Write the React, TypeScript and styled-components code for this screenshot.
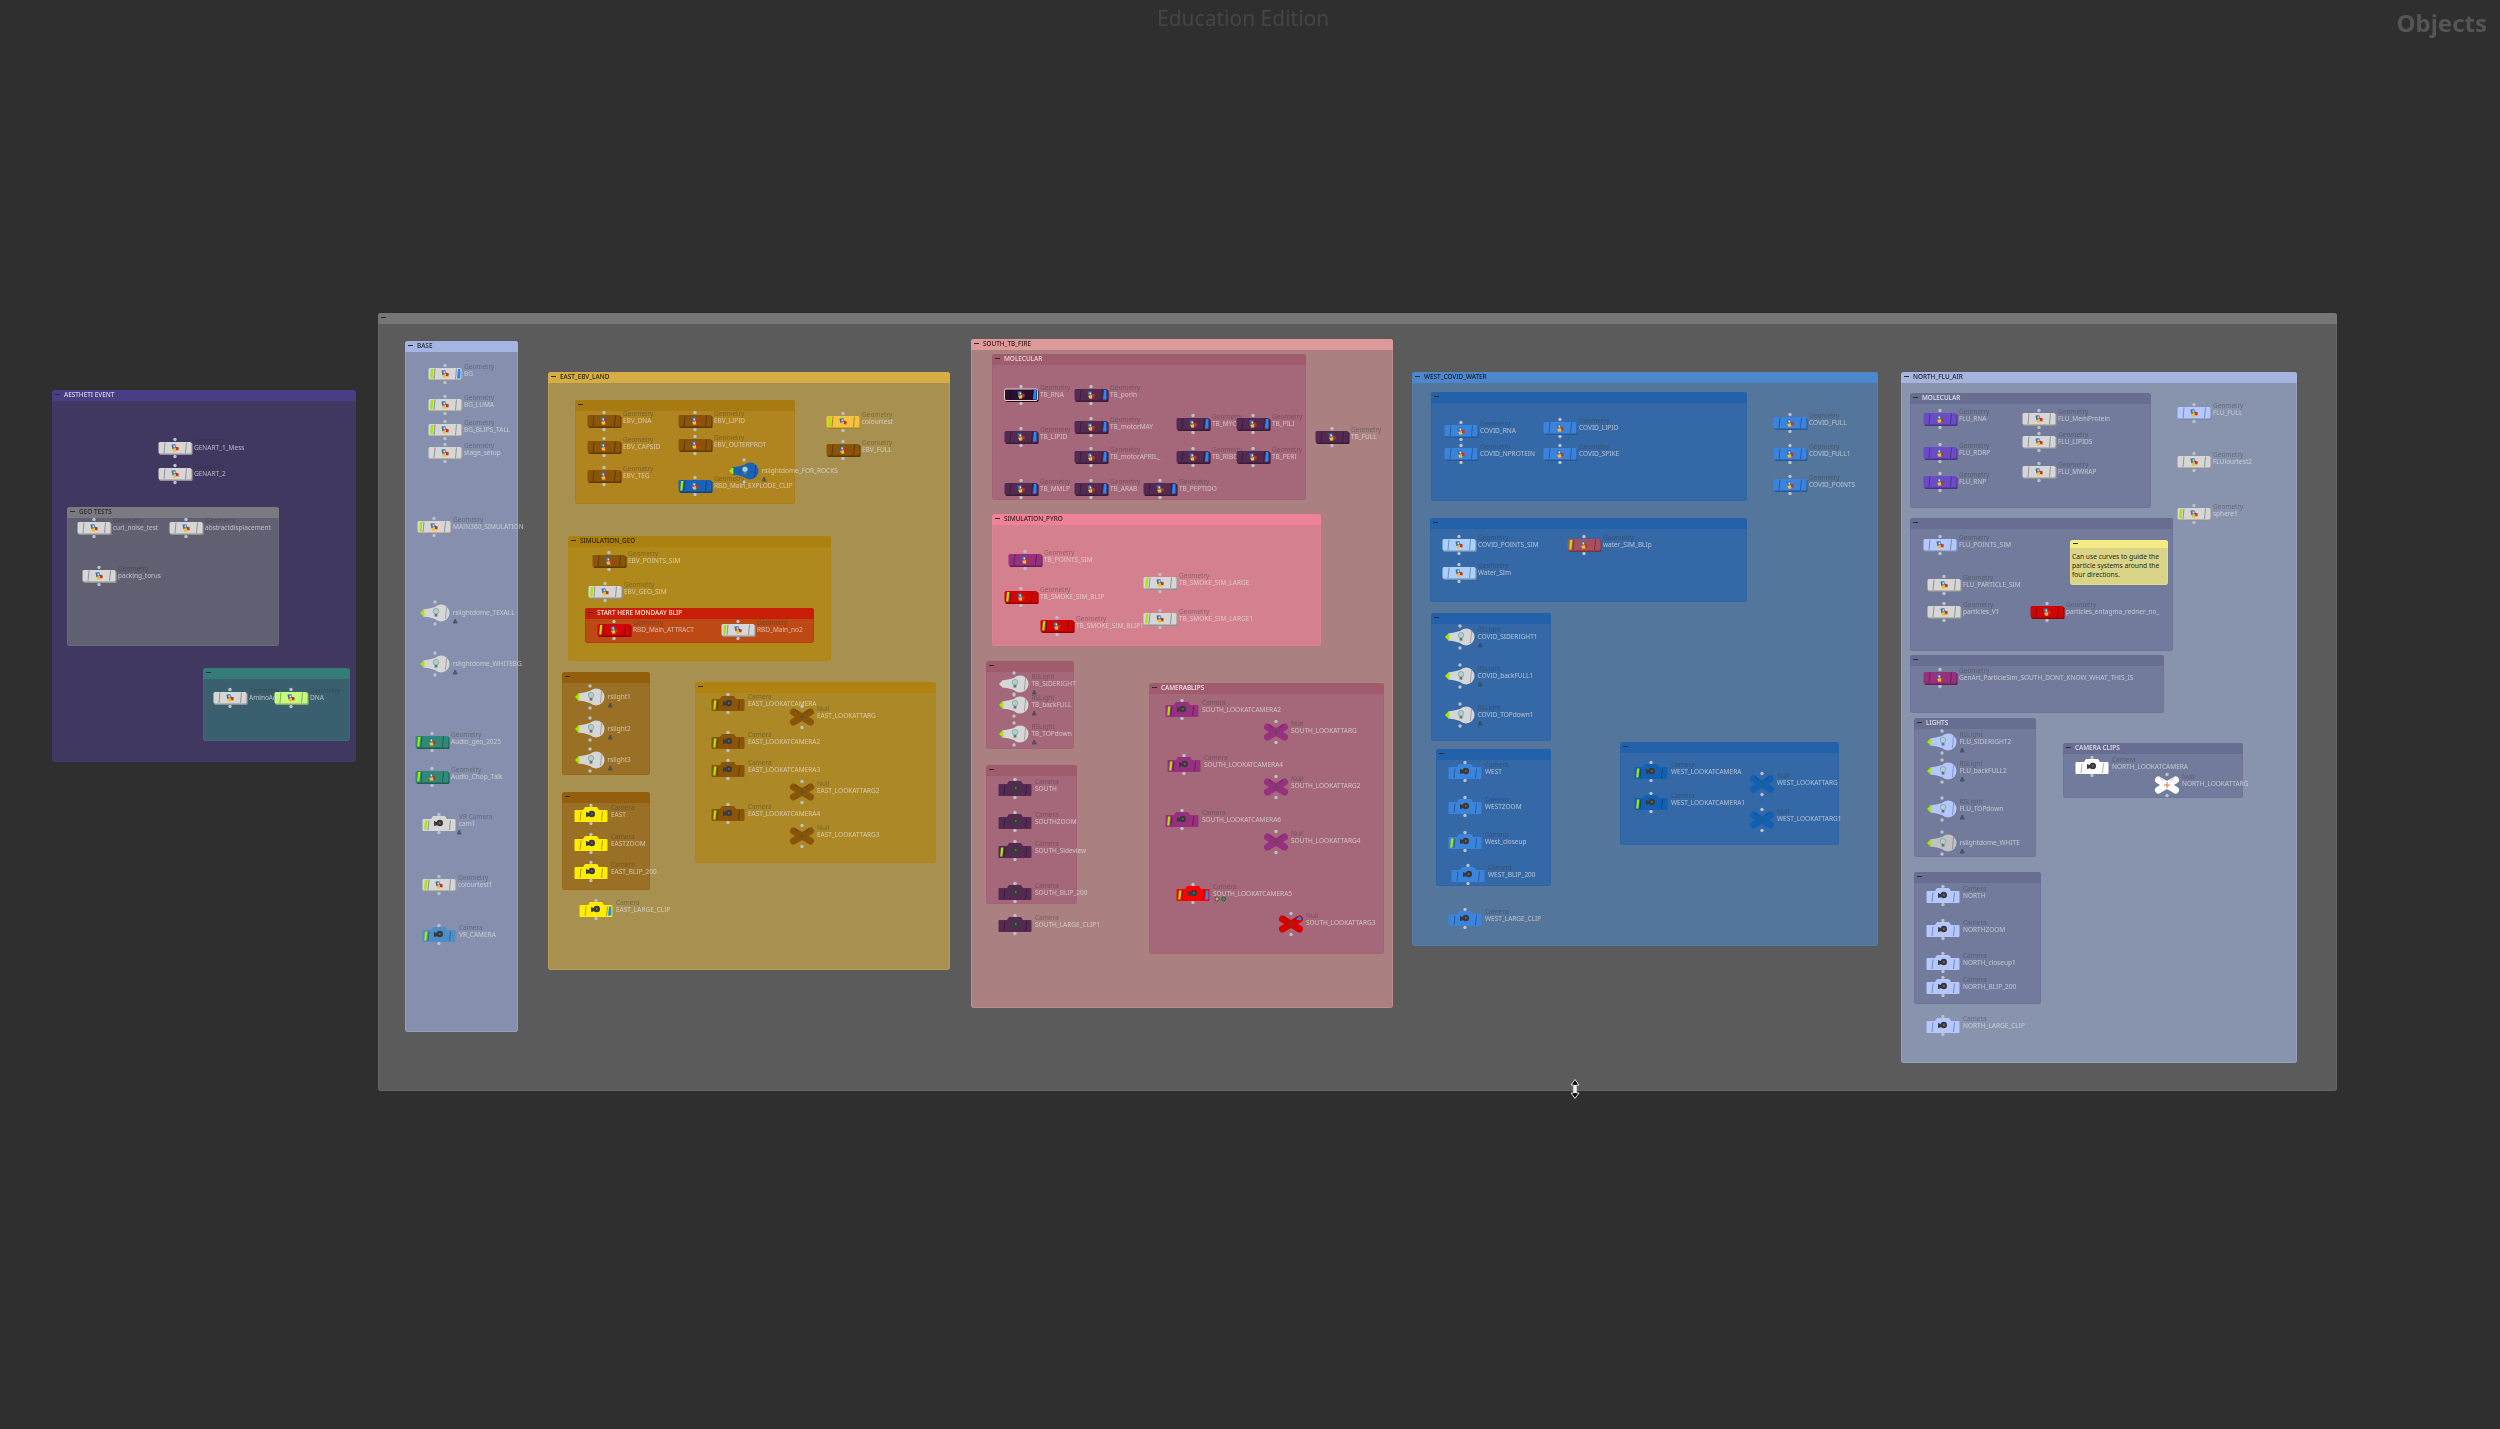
import React from 'react'
import styled, { createGlobalStyle } from 'styled-components'

const GlobalStyle = createGlobalStyle`
  html, body {
    margin: 0;
    background: #2f2f2f;
    overflow: hidden;
  }
`

const Canvas = styled.div`
  position: relative;
  width: 2500px;
  height: 1429px;
  overflow: hidden;
  background: #2f2f2f;
  font-family: 'Noto Sans', sans-serif;
`

const Network = styled.div`
  position: absolute;
  inset: 0;
  filter: blur(0.3px);
`

const Edition = styled.div`
  position: absolute;
  left: 1157px;
  top: 3px;
  font-size: 21px;
  line-height: 30px;
  color: #454545;
  white-space: nowrap;
`

const Title = styled.div`
  position: absolute;
  right: 13px;
  top: 5px;
  font-size: 24px;
  line-height: 36px;
  font-weight: 700;
  color: #555;
`

const BoxFrame = styled.div<{ $x: number; $y: number; $r: number; $b: number; $body: string; $head: string }>`
  position: absolute;
  left: ${(p) => p.$x}px;
  top: ${(p) => p.$y}px;
  width: ${(p) => p.$r - p.$x}px;
  height: ${(p) => p.$b - p.$y}px;
  background: ${(p) => p.$body};
  border-radius: 3px;
  box-shadow: inset 0 0 0 1px ${(p) => p.$head}66;
`

const BoxHead = styled.div<{ $head: string; $ink: string; $h?: number }>`
  box-sizing: border-box;
  display: flex;
  align-items: center;
  gap: 2px;
  height: ${(p) => p.$h ?? 11}px;
  padding: 0 0 1.5px 1px;
  border-radius: 3px 3px 0 0;
  background: ${(p) => p.$head};
  color: ${(p) => p.$ink};
  font-size: 6.4px;
  font-weight: 500;
  white-space: nowrap;
`

const Collapse = styled.span`
  flex: none;
  width: 9px;
  height: 100%;
  display: flex;
  align-items: center;
  justify-content: center;

  &::before {
    content: '';
    width: 5px;
    height: 1.4px;
    background: #2c2c34;
  }
`

const StickyText = styled.div`
  padding: 3.5px 2px;
  font-size: 6.7px;
  line-height: 9px;
  color: #2d2a10;
  white-space: nowrap;
`

const NodeWrap = styled.div<{ $x: number; $y: number }>`
  position: absolute;
  left: ${(p) => p.$x - 24}px;
  top: ${(p) => p.$y - 14}px;
  height: 28px;
  display: flex;
  align-items: center;
`

const Glyph = styled.svg`
  flex: none;
  width: 48px;
  height: 28px;
  overflow: visible;
`

const Label = styled.div<{ $off: number }>`
  display: flex;
  flex-direction: column;
  margin-left: ${(p) => p.$off - 24}px;
  margin-bottom: 8px;
  white-space: nowrap;
  font-size: 6.5px;
  line-height: 7px;
`

const TypeText = styled.span`
  color: rgba(50, 50, 50, 0.42);
`

const NameText = styled.span`
  color: rgba(226, 226, 226, 0.72);
`

const CursorMark = styled.svg`
  position: absolute;
  left: 1570px;
  top: 1079px;
  width: 10px;
  height: 20px;
`

type Kind = 'geo' | 'cam' | 'null' | 'light'
type Flag = 'g' | 'b' | 'gb' | ''

interface NodeData {
  k: Kind
  n: string
  x: number
  y: number
  c: string
  f?: Flag
  t?: string
  sel?: boolean
  stamp?: boolean
  dots?: boolean
}

const GREY = '#d6d6d6'
const BROWN = '#8a5509'
const PLUM = '#552a52'
const MAGENTA = '#96307f'
const RED = '#d20505'
const BLUE = '#3b84de'
const NAVY = '#1260b4'
const SKY = '#a9d0ff'
const PERI = '#b4c8ff'
const VIOLET = '#6a4cc8'
const YELLOW = '#ffec00'

const geo = (n: string, x: number, y: number, c = GREY, f: Flag = '', extra: Partial<NodeData> = {}): NodeData => ({ k: 'geo', n, x, y, c, f, t: 'Geometry', ...extra })
const cam = (n: string, x: number, y: number, c: string, f: Flag = '', extra: Partial<NodeData> = {}): NodeData => ({ k: 'cam', n, x, y, c, f, t: 'Camera', ...extra })
const nul = (n: string, x: number, y: number, c: string, f: Flag = ''): NodeData => ({ k: 'null', n, x, y, c, f, t: 'Null' })
const bulb = (n: string, x: number, y: number, c = GREY, f: Flag = 'g', t = 'RSLight'): NodeData => ({ k: 'light', n, x, y, c, f, t, stamp: true })

const boxes = [
  { x: 52, y: 390, r: 356, b: 762, head: '#4a3d86', body: '#403860', ink: '#d8d8e0', title: 'AESTHETI EVENT' },
  { x: 67, y: 507, r: 279, b: 646, head: '#7b7981', body: '#615f72', ink: '#2a2a2a', title: 'GEO TESTS' },
  { x: 203, y: 668, r: 350, b: 741, head: '#347c75', body: '#3a6070', ink: '#222', title: '' },
  { x: 378, y: 313, r: 2337, b: 1091, head: '#767676', body: '#5b5b5b', ink: '#222', title: '' },
  { x: 405, y: 341, r: 518, b: 1032, head: '#a5b5e2', body: '#8690ae', ink: '#24242c', title: 'BASE' },
  { x: 548, y: 372, r: 950, b: 970, head: '#d6ad45', body: '#a89150', ink: '#2a2208', title: 'EAST_EBV_LAND' },
  { x: 575, y: 400, r: 795, b: 504, head: '#a87a12', body: '#b0841f', ink: '#222', title: '' },
  { x: 568, y: 536, r: 831, b: 661, head: '#ad8110', body: '#b0891d', ink: '#2a2208', title: 'SIMULATION_GEO' },
  { x: 585, y: 608, r: 814, b: 643, head: '#c81e08', body: '#bd4a15', ink: '#f2e4e0', title: 'START HERE MONDAAY BLIP' },
  { x: 562, y: 672, r: 650, b: 775, head: '#925f0d', body: '#9a7026', ink: '#222', title: '' },
  { x: 562, y: 792, r: 650, b: 890, head: '#925f0d', body: '#9a7026', ink: '#222', title: '' },
  { x: 695, y: 682, r: 936, b: 863, head: '#b0820f', body: '#ad8826', ink: '#222', title: '' },
  { x: 971, y: 339, r: 1393, b: 1008, head: '#de9a9a', body: '#aa8080', ink: '#3a2020', title: 'SOUTH_TB_FIRE' },
  { x: 992, y: 354, r: 1306, b: 500, head: '#a05c6c', body: '#a5687a', ink: '#e6d6da', title: 'MOLECULAR' },
  { x: 992, y: 514, r: 1321, b: 646, head: '#ee8298', body: '#d4808f', ink: '#3a2028', title: 'SIMULATION_PYRO' },
  { x: 986, y: 661, r: 1074, b: 749, head: '#a05c6c', body: '#a5687a', ink: '#222', title: '' },
  { x: 986, y: 765, r: 1077, b: 904, head: '#a05c6c', body: '#a5687a', ink: '#222', title: '' },
  { x: 1149, y: 683, r: 1384, b: 954, head: '#a05c6c', body: '#a5687a', ink: '#f0e4e8', title: 'CAMERABLIPS' },
  { x: 1412, y: 372, r: 1878, b: 946, head: '#4d87cc', body: '#54759c', ink: '#101c30', title: 'WEST_COVID_WATER' },
  { x: 1431, y: 392, r: 1747, b: 501, head: '#2361ab', body: '#3568a6', ink: '#222', title: '' },
  { x: 1430, y: 518, r: 1747, b: 602, head: '#2361ab', body: '#3568a6', ink: '#222', title: '' },
  { x: 1431, y: 613, r: 1551, b: 741, head: '#2361ab', body: '#3568a6', ink: '#222', title: '' },
  { x: 1436, y: 749, r: 1551, b: 886, head: '#2361ab', body: '#3568a6', ink: '#222', title: '' },
  { x: 1620, y: 742, r: 1839, b: 845, head: '#2361ab', body: '#3568a6', ink: '#222', title: '' },
  { x: 1901, y: 372, r: 2297, b: 1063, head: '#a6b4df', body: '#8893ae', ink: '#24242c', title: 'NORTH_FLU_AIR' },
  { x: 1910, y: 393, r: 2151, b: 508, head: '#686e91', body: '#737b9d', ink: '#e0e2ea', title: 'MOLECULAR' },
  { x: 1910, y: 518, r: 2173, b: 651, head: '#686e91', body: '#737b9d', ink: '#222', title: '' },
  { x: 1910, y: 655, r: 2164, b: 713, head: '#686e91', body: '#737b9d', ink: '#222', title: '' },
  { x: 1914, y: 718, r: 2036, b: 857, head: '#686e91', body: '#737b9d', ink: '#e0e2ea', title: 'LIGHTS' },
  { x: 1914, y: 872, r: 2041, b: 1004, head: '#686e91', body: '#737b9d', ink: '#222', title: '' },
  { x: 2063, y: 743, r: 2243, b: 798, head: '#686e91', body: '#737b9d', ink: '#e0e2ea', title: 'CAMERA CLIPS' },
]

const nodes: NodeData[] = [
  // aesthetic event
  geo('GENART_1_Mess', 175, 448),
  geo('GENART_2', 175, 474),
  geo('curl_noise_test', 94, 528),
  geo('abstractdisplacement', 186, 528),
  geo('packing_torus', 99, 576),
  geo('AminoAcids', 230, 698),
  geo('DNA', 291, 698, '#c5fc80'),

  // base
  geo('BG', 445, 374, GREY, 'gb'),
  geo('BG_LUMA', 445, 405, GREY, 'g'),
  geo('BG_BLIPS_TALL', 445, 430, GREY, 'g'),
  geo('stage_setup', 445, 453),
  geo('MAIN360_SIMULATION', 434, 527, GREY, 'g'),
  bulb('rslightdome_TEXALL', 435, 613, GREY, 'g', ''),
  bulb('rslightdome_WHITEBG', 435, 664, GREY, 'g', ''),
  geo('Audio_geo_2025', 432, 742, '#2f8a78', 'g'),
  geo('Audio_Chop_Talk', 432, 777, '#2f8a78', 'g'),
  cam('cam1', 439, 824, GREY, 'g', { t: 'VR Camera', stamp: true }),
  geo('colourtest1', 439, 885, GREY, 'g'),
  cam('VR_CAMERA', 439, 935, '#4a8fc8', 'g'),

  // east
  geo('EBV_DNA', 604, 421, BROWN),
  geo('EBV_LIPID', 695, 421, BROWN),
  geo('EBV_CAPSID', 604, 447, BROWN),
  geo('EBV_OUTERPROT', 695, 445, BROWN),
  geo('EBV_TEG', 604, 476, BROWN),
  bulb('rslightdome_FOR_ROCKS', 744, 471, '#1a62b8', 'g', ''),
  geo('RBD_Main_EXPLODE_CLIP', 695, 486, '#1a62b8', 'g'),
  geo('colourtest', 843, 422, '#f5c33f', 'g'),
  geo('EBV_FULL', 843, 450, BROWN),
  geo('EBV_POINTS_SIM', 609, 561, BROWN),
  geo('EBV_GEO_SIM', 605, 592, GREY, 'g'),
  geo('RBD_Main_ATTRACT', 614, 630, RED, 'g'),
  geo('RBD_Main_no2', 738, 630, GREY, 'g'),
  bulb('rslight1', 590, 697, GREY, 'g', ''),
  bulb('rslight2', 590, 729, GREY, 'g', ''),
  bulb('rslight3', 590, 760, GREY, 'g', ''),
  cam('EAST', 591, 815, YELLOW),
  cam('EASTZOOM', 591, 844, YELLOW),
  cam('EAST_BLIP_200', 591, 872, YELLOW),
  cam('EAST_LARGE_CLIP', 596, 910, YELLOW, 'b'),
  cam('EAST_LOOKATCAMERA', 728, 704, BROWN, 'g'),
  nul('EAST_LOOKATTARG', 802, 717, BROWN),
  cam('EAST_LOOKATCAMERA2', 728, 742, BROWN, 'g'),
  cam('EAST_LOOKATCAMERA3', 728, 770, BROWN, 'g'),
  nul('EAST_LOOKATTARG2', 802, 792, BROWN),
  cam('EAST_LOOKATCAMERA4', 728, 814, BROWN, 'g'),
  nul('EAST_LOOKATTARG3', 802, 836, BROWN),

  // south
  geo('TB_RNA', 1021, 395, '#2a1030', 'b', { sel: true }),
  geo('TB_porin', 1091, 395, PLUM, 'b'),
  geo('TB_LIPID', 1021, 437, PLUM, 'b'),
  geo('TB_motorMAY', 1091, 427, PLUM, 'b'),
  geo('TB_motorAPRIL_', 1091, 457, PLUM, 'b'),
  geo('TB_MYCO', 1193, 424, PLUM, 'b'),
  geo('TB_PILI', 1253, 424, PLUM, 'b'),
  geo('TB_RIBO', 1193, 457, PLUM, 'b'),
  geo('TB_PERI', 1253, 457, PLUM, 'b'),
  geo('TB_MMLP', 1021, 489, PLUM, 'b'),
  geo('TB_ARAB', 1091, 489, PLUM, 'b'),
  geo('TB_PEPTIDO', 1160, 489, PLUM, 'b'),
  geo('TB_FULL', 1332, 437, PLUM),
  geo('TB_POINTS_SIM', 1025, 560, MAGENTA),
  geo('TB_SMOKE_SIM_BLIP', 1021, 597, RED, 'g'),
  geo('TB_SMOKE_SIM_BLIP1', 1057, 626, RED, 'g'),
  geo('TB_SMOKE_SIM_LARGE', 1160, 583, GREY, 'g'),
  geo('TB_SMOKE_SIM_LARGE1', 1160, 619, GREY, 'g'),
  bulb('TB_SIDERIGHT', 1014, 684, GREY, ''),
  bulb('TB_backFULL', 1014, 705),
  bulb('TB_TOPdown', 1014, 734),
  cam('SOUTH', 1015, 789, PLUM),
  cam('SOUTHZOOM', 1015, 822, PLUM),
  cam('SOUTH_Sideview', 1015, 851, PLUM, 'g'),
  cam('SOUTH_BLIP_200', 1015, 893, PLUM),
  cam('SOUTH_LARGE_CLIP1', 1015, 925, PLUM),
  cam('SOUTH_LOOKATCAMERA2', 1182, 710, MAGENTA, 'g'),
  nul('SOUTH_LOOKATTARG', 1276, 732, MAGENTA),
  cam('SOUTH_LOOKATCAMERA4', 1184, 765, MAGENTA, 'g'),
  nul('SOUTH_LOOKATTARG2', 1276, 787, MAGENTA),
  cam('SOUTH_LOOKATCAMERA6', 1182, 820, MAGENTA, 'g'),
  nul('SOUTH_LOOKATTARG4', 1276, 842, MAGENTA),
  cam('SOUTH_LOOKATCAMERA5', 1193, 894, '#ff0000', 'gb', { dots: true }),
  nul('SOUTH_LOOKATTARG3', 1291, 924, '#d80000', 'b'),

  // west
  geo('COVID_RNA', 1461, 431, BLUE),
  geo('COVID_NPROTEIN', 1461, 454, BLUE),
  geo('COVID_LIPID', 1560, 428, BLUE),
  geo('COVID_SPIKE', 1560, 454, BLUE),
  geo('COVID_FULL', 1790, 423, BLUE),
  geo('COVID_FULL1', 1790, 454, BLUE),
  geo('COVID_POINTS', 1790, 485, BLUE),
  geo('COVID_POINTS_SIM', 1459, 545, SKY),
  geo('water_SIM_BLIp', 1584, 545, '#a85060', 'g'),
  geo('Water_SIm', 1459, 573, SKY),
  bulb('COVID_SIDERIGHT1', 1460, 637),
  bulb('COVID_backFULL1', 1460, 676),
  bulb('COVID_TOPdown1', 1460, 715),
  cam('WEST', 1465, 772, BLUE),
  cam('WESTZOOM', 1465, 807, BLUE),
  cam('West_closeup', 1465, 842, BLUE, 'g'),
  cam('WEST_BLIP_200', 1468, 875, BLUE),
  cam('WEST_LARGE_CLIP', 1465, 919, BLUE),
  cam('WEST_LOOKATCAMERA', 1651, 772, NAVY, 'g'),
  cam('WEST_LOOKATCAMERA1', 1651, 803, NAVY, 'g'),
  nul('WEST_LOOKATTARG', 1762, 784, NAVY),
  nul('WEST_LOOKATTARG1', 1762, 820, NAVY),

  // north
  geo('FLU_RNA', 1940, 419, VIOLET),
  geo('FLU_RDRP', 1940, 453, VIOLET),
  geo('FLU_RNP', 1940, 482, VIOLET),
  geo('FLU_MemProtein', 2039, 419),
  geo('FLU_LIPIDS', 2039, 442),
  geo('FLU_MWRAP', 2039, 472),
  geo('FLU_FULL', 2194, 413, PERI),
  geo('FLUlourtest2', 2194, 462),
  geo('sphere1', 2194, 514, GREY, 'g'),
  geo('FLU_POINTS_SIM', 1940, 545, PERI),
  geo('FLU_PARTICLE_SIM', 1944, 585),
  geo('particles_V1', 1944, 612),
  geo('particles_entagma_redner_no_', 2047, 612, RED),
  geo('GenArt_ParticleSim_SOUTH_DONT_KNOW_WHAT_THIS_IS', 1940, 678, MAGENTA),
  bulb('FLU_SIDERIGHT2', 1942, 742, PERI),
  bulb('FLU_backFULL2', 1942, 771, PERI),
  bulb('FLU_TOPdown', 1942, 809, PERI),
  bulb('rslightdome_WHITE', 1942, 843, '#c2c2c2', 'g', ''),
  cam('NORTH', 1943, 896, PERI),
  cam('NORTHZOOM', 1943, 930, PERI),
  cam('NORTH_closeup1', 1943, 963, PERI),
  cam('NORTH_BLIP_200', 1943, 987, PERI),
  cam('NORTH_LARGE_CLIP', 1943, 1026, PERI),
  cam('NORTH_LOOKATCAMERA', 2092, 767, '#ffffff'),
  nul('NORTH_LOOKATTARG', 2167, 785, '#ffffff'),
]

const LABEL_OFFSET: Record<Kind, number> = { geo: 19, cam: 20, null: 15, light: 17.5 }
const PORT_GAP: Record<Kind, number> = { geo: 8.5, cam: 9, null: 10.5, light: 11 }

const GeoIcon = () => (
  <g>
    <path d="M-3.5 -3.4 L0.4 -3.8 L1 0 L-2.6 1.2 Z" fill="#3e6f9e" />
    <path d="M-2.8 1 L1 0 L1.4 3.6 L-1.6 3.8 Z" fill="#f0c030" />
    <path d="M0.8 -1.6 L3.8 -0.6 L3.4 2.4 L1 2 Z" fill="#c8321e" />
    <path d="M-1.6 -2.4 L0 -2.6 L0.2 -0.8 L-1.2 -0.6 Z" fill="#dfe6ea" />
  </g>
)

const CamIcon = () => (
  <g fill="#3a3a3c">
    <circle cx="0.8" cy="-1" r="3.2" />
    <path d="M-5 -3 L-1 -1.6 L-1 1 L-5 2 Z" />
    <circle cx="0.8" cy="-1" r="1" fill="#6a6a6e" />
  </g>
)

const Flags = ({ f, top, bottom }: { f: Flag; top: number; bottom: number }) => (
  <>
    {f.includes('g') && <polygon points={`-14,${top} -11.6,${top} -12.6,${bottom} -14.8,${bottom}`} fill="#a6e800" />}
    {f.includes('b') && <polygon points={`13,${top} 15.4,${top} 15.4,${bottom} 12,${bottom}`} fill="#1e8cff" />}
  </>
)

const Slashes = ({ top, bottom }: { top: number; bottom: number }) => (
  <g stroke="rgba(0,0,0,0.45)" strokeWidth="0.7">
    <line x1="-10" y1={top} x2="-11" y2={bottom} />
    <line x1="11.5" y1={top} x2="10.5" y2={bottom} />
  </g>
)

const Shape = ({ d }: { d: NodeData }) => {
  const f = d.f ?? ''
  if (d.k === 'geo') {
    return (
      <>
        <rect x="-15.5" y="-5" width="33" height="12" rx="1.5" fill={d.c} />
        <rect x="-15.5" y="-5" width="33" height="12" rx="1.5" fill="rgba(0,0,0,0.32)" />
        <rect x="-16.5" y="-6" width="33" height="11.5" rx="1.5" fill={d.c} stroke={d.sel ? '#ecd0c8' : 'none'} strokeWidth={d.sel ? 1 : 0} />
        <Slashes top={-5.5} bottom={5} />
        <Flags f={f} top={-5} bottom={4.6} />
        <GeoIcon />
      </>
    )
  }
  if (d.k === 'cam') {
    return (
      <>
        <path d="M-16.5 -4 Q-16.5 -5 -15.5 -5 L-8 -5 L-6 -8 L6 -8 L8 -5 L15.5 -5 Q16.5 -5 16.5 -4 L16.5 6 Q16.5 7 15.5 7 L-15.5 7 Q-16.5 7 -16.5 6 Z" fill={d.c} />
        <Slashes top={-3.5} bottom={6} />
        <Flags f={f} top={-3.4} bottom={5.4} />
        <CamIcon />
      </>
    )
  }
  if (d.k === 'null') {
    const cross = d.c === '#ffffff' ? '#d8783c' : 'rgba(60,90,60,0.65)'
    return (
      <>
        <g stroke={d.c} strokeWidth="7" strokeLinecap="round">
          <line x1="-8.5" y1="-5" x2="8.5" y2="5" />
          <line x1="-8.5" y1="5" x2="8.5" y2="-5" />
        </g>
        <g stroke="rgba(0,0,0,0.4)" strokeWidth="0.7">
          <line x1="-7" y1="-7.4" x2="-3.4" y2="-4" />
          <line x1="7" y1="-7.4" x2="3.4" y2="-4" />
        </g>
        <g stroke={cross} strokeWidth="1">
          <line x1="-3" y1="0" x2="3" y2="0" />
          <line x1="0" y1="-3" x2="0" y2="3" />
        </g>
        {f.includes('b') && <path d="M5 -4.5 L8 -7.5 Q11 -7 10.5 -3.4 Z" fill="#1e8cff" />}
      </>
    )
  }
  const tip = f.includes('g') ? '#a6e800' : d.c
  return (
    <>
      <path d="M-12 -3.6 Q-6 -4 0 -6 A8.5 8.5 0 1 1 0 6 Q-6 4 -12 3.6 Z" fill={d.c} />
      <polygon points="-15,0 -12,-3 -12,3" fill={tip} />
      <rect x="-12" y="-3" width="1.4" height="6" fill={tip} />
      <circle cx="1" cy="-1.8" r="2.8" fill="#a9d3d2" stroke="rgba(60,80,80,0.6)" strokeWidth="0.5" />
      <rect x="-0.4" y="1" width="2.8" height="2.6" fill="#66757a" />
      <line x1="11.6" y1="-6" x2="10.4" y2="6" stroke="rgba(0,0,0,0.35)" strokeWidth="0.7" />
    </>
  )
}

const NodeItem = ({ d }: { d: NodeData }) => {
  const gap = PORT_GAP[d.k]
  const shift = d.k === 'cam' ? -0.5 : 0
  const nameDrop = d.k === 'null' ? 1 : 0
  return (
    <NodeWrap $x={d.x} $y={d.y - nameDrop}>
      <Glyph viewBox="-24 -14 48 28">
        <g transform={`translate(0 ${nameDrop})`}>
          <circle cx="0" cy={shift - gap} r="1.7" fill="#bcc2c8" />
          <circle cx="0" cy={shift + gap} r="1.7" fill="#bcc2c8" />
          <Shape d={d} />
          {d.stamp && (
            <g fill="rgba(55,70,80,0.75)">
              <rect x="18" y="8.2" width="4.4" height="2.4" rx="0.5" />
              <rect x="19" y="6" width="2.4" height="2.4" rx="1" />
            </g>
          )}
          {d.dots && (
            <g>
              <circle cx="24" cy="5" r="2" fill="#b8b878" stroke="#222" strokeWidth="0.6" />
              <circle cx="30.6" cy="5" r="2" fill="#2a9a58" stroke="#234" strokeWidth="0.6" />
            </g>
          )}
        </g>
      </Glyph>
      <Label $off={LABEL_OFFSET[d.k]}>
        <TypeText>{d.t || '\u00a0'}</TypeText>
        <NameText>{d.n}</NameText>
      </Label>
    </NodeWrap>
  )
}

const App = () => (
  <>
    <GlobalStyle />
    <Canvas>
      <Network>
        {boxes.map((b, i) => (
          <BoxFrame key={i} $x={b.x} $y={b.y} $r={b.r} $b={b.b} $body={b.body} $head={b.head}>
            <BoxHead $head={b.head} $ink={b.ink}>
              <Collapse />
              {b.title}
            </BoxHead>
          </BoxFrame>
        ))}
        {nodes.map((d) => (
          <NodeItem key={d.n + d.x + d.y} d={d} />
        ))}
        <BoxFrame $x={2070} $y={540} $r={2168} $b={585} $body="#d9d488" $head="#f3ea85">
          <BoxHead $head="#f3ea85" $ink="#222" $h={8}>
            <Collapse />
          </BoxHead>
          <StickyText>
            Can use curves to guide the
            <br />
            particle systems around the
            <br />
            four directions.
          </StickyText>
        </BoxFrame>
      </Network>
      <Edition>Education Edition</Edition>
      <Title>Objects</Title>
      <CursorMark viewBox="0 0 10 20">
        <path d="M5 0.5 L9 6 L6.6 6 L6.6 14 L9 14 L5 19.5 L1 14 L3.4 14 L3.4 6 L1 6 Z" fill="#111" stroke="#ddd" strokeWidth="1" />
        <rect x="4" y="6" width="2" height="8" fill="#eee" />
      </CursorMark>
    </Canvas>
  </>
)

export default App
